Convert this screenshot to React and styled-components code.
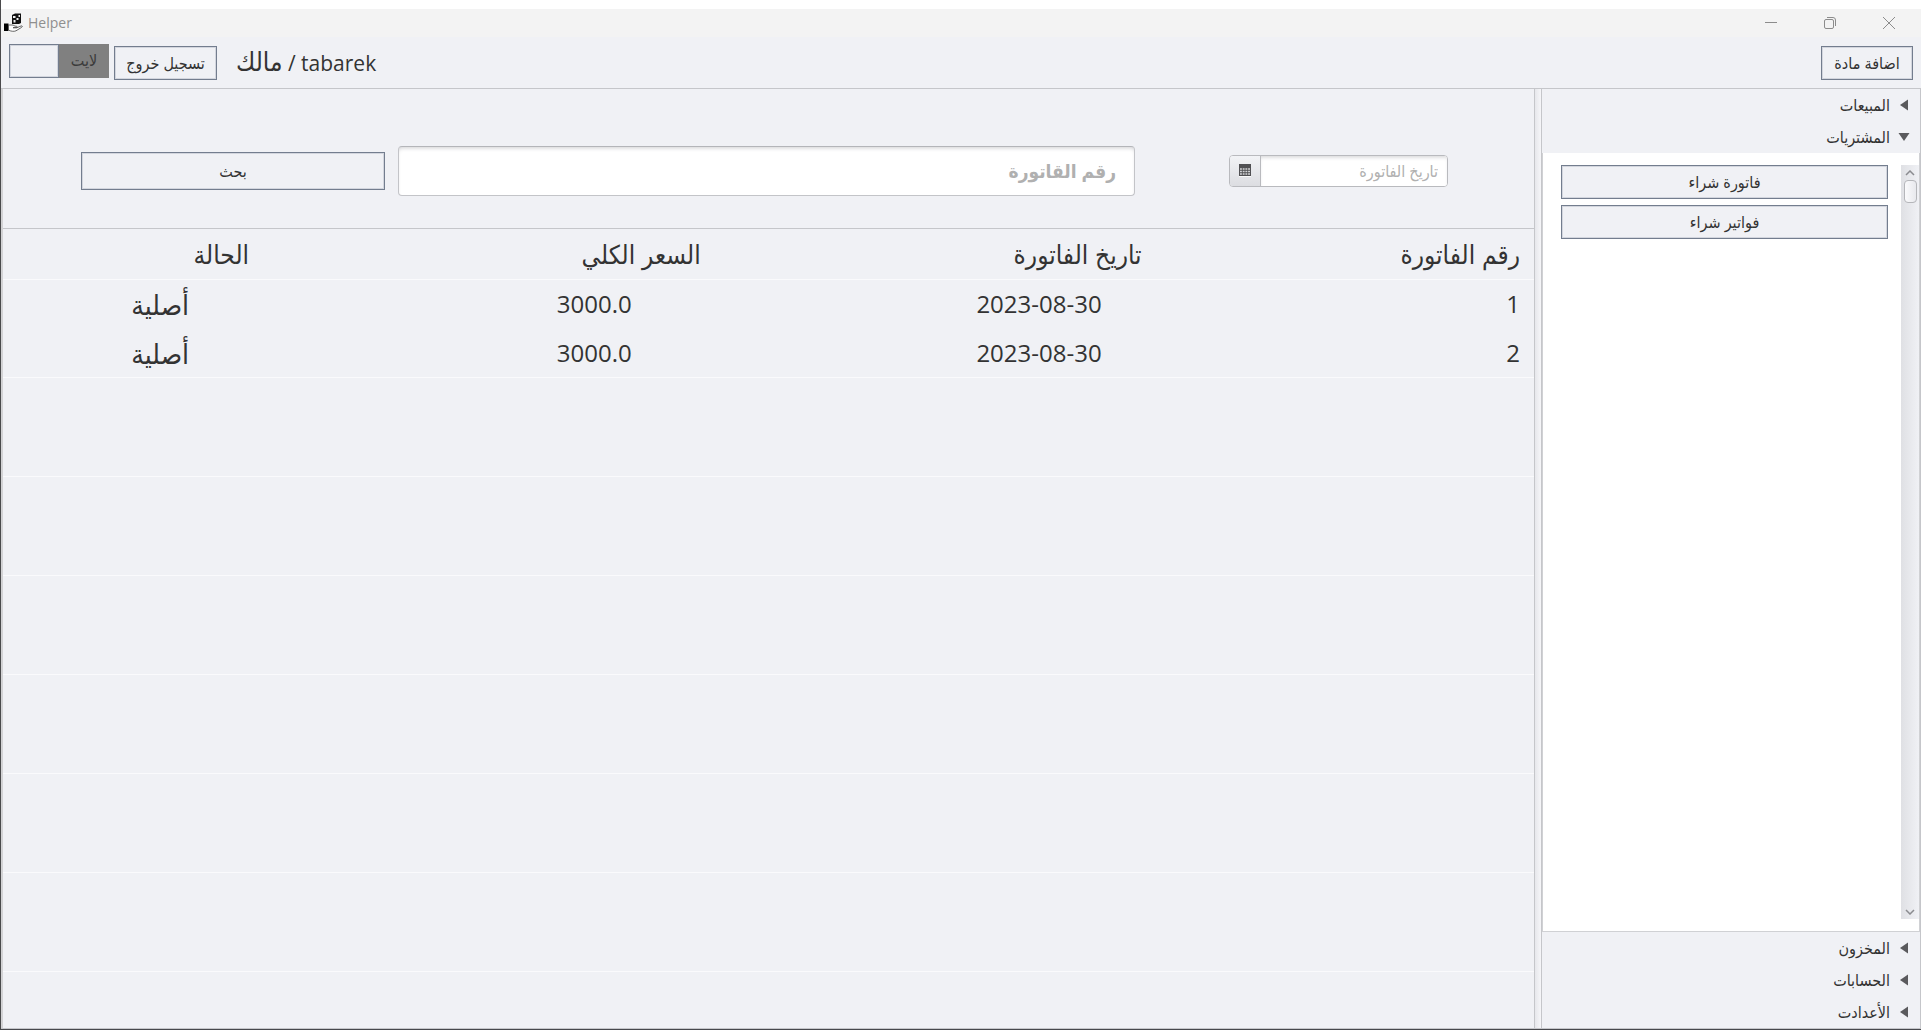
import React from 'react';
import styled, { createGlobalStyle } from 'styled-components';

const ink = '#333333';
const surface = '#f0f1f5';
const line = '#c5c6ca';
const outline = '#737d8e';

const GlobalStyle = createGlobalStyle`
  * { box-sizing: border-box; }
  html, body, #root { height: 100%; }
  body {
    margin: 0;
    background: #ffffff;
    color: ${ink};
    font: 16px/20px 'Open Sans', 'DejaVu Sans Condensed', 'DejaVu Sans', sans-serif;
  }
  button, input { font: inherit; color: inherit; margin: 0; }
`;

const Window = styled.div`
  height: 100vh;
  display: flex;
  flex-direction: column;
  padding-top: 9px;
  border-left: 1px solid #4a4a4c;
  border-bottom: 1px solid #47484c;
`;

const TitleBar = styled.header`
  height: 28px;
  flex: none;
  display: flex;
  align-items: center;
  background: #f3f3f3;
  color: #8f8f8f;
  padding: 0 26px 0 3px;
`;

const Title = styled.span`
  flex: 1;
  margin-left: 5px;
  font-size: 14px;
  line-height: 22px;
`;

const WindowButtons = styled.div`
  display: flex;
  gap: 47px;
`;

const WindowButton = styled.button`
  width: 12px;
  height: 12px;
  padding: 0;
  border: 0;
  background: none;
  display: flex;
  svg { display: block; }
`;

const Toolbar = styled.div`
  height: 52px;
  flex: none;
  display: flex;
  align-items: flex-start;
  gap: 5px;
  padding: 7px 8px 0;
  background: ${surface};
  border-bottom: 1px solid ${line};
`;

const OutlineButton = styled.button`
  height: ${p => p.$height || 34}px;
  width: ${p => p.$width || 'auto'};
  padding: 0;
  background: ${surface};
  border: 1px solid ${outline};
  box-shadow: inset 0 0 0 1px #d3d6de;
  line-height: 20px;
`;

const ToolbarButton = styled(OutlineButton)`
  margin-top: 2px;
`;

const Toggle = styled.button`
  width: 100px;
  height: 34px;
  padding: 0;
  border: 0;
  display: flex;
  background: #808080;
  color: #3b3b3b;
  line-height: 32px;
`;

const Knob = styled.span`
  width: 50px;
  height: 34px;
  background: ${surface};
  border: 1px solid ${outline};
  box-shadow: inset 0 0 0 1px #d3d6de;
`;

const ToggleText = styled.span`
  flex: 1;
`;

const UserName = styled.span`
  flex: 1;
  padding-left: 14px;
  font-size: 21px;
  line-height: 34px;
`;

const Role = styled.span`
  font-size: 26px;
`;

const Workspace = styled.div`
  flex: 1;
  min-height: 0;
  display: flex;
  background: ${surface};
  border-bottom: 1px solid ${line};
`;

const Main = styled.main`
  flex: 1;
  min-width: 0;
  display: flex;
  flex-direction: column;
  overflow: hidden;
  border-left: 2px solid #d3d3d5;
`;

const SearchForm = styled.form`
  flex: none;
  display: flex;
  align-items: center;
  padding: 57px 86px 32px 78px;
  border-bottom: 1px solid ${line};
`;

const SearchSlot = styled.div`
  flex: ${p => p.$grow} 1 0;
  min-width: 0;
  display: flex;
  margin-right: ${p => p.$after || 0}px;
`;

const NumberField = styled.input`
  width: 100%;
  height: 50px;
  padding: 0 18px;
  background: #ffffff;
  border: 1px solid #c3c4c8;
  border-top-color: #b4b5b9;
  border-radius: 4px;
  box-shadow: inset 0 3px 4px -2px #cfcfd2;
  font-size: 19px;
  font-weight: 700;
  &::placeholder { color: #b0b0b0; opacity: 1; }
`;

const DatePicker = styled.div`
  width: 100%;
  height: 32px;
  display: flex;
  background: #ffffff;
  border: 1px solid #b9babe;
  border-radius: 4px;
  overflow: hidden;
`;

const CalendarButton = styled.button`
  width: 31px;
  flex: none;
  padding: 0;
  display: flex;
  align-items: center;
  justify-content: center;
  border: 0;
  border-right: 1px solid #b9babe;
  background: linear-gradient(#f2f3f6, #dcdde1);
`;

const DateField = styled.input`
  flex: 1;
  min-width: 0;
  border: 0;
  padding: 0 9px;
  background: #ffffff;
  box-shadow: inset 0 3px 4px -2px #cfcfd2;
  &::placeholder { color: #b0b0b0; opacity: 1; }
`;

const Invoices = styled.table`
  flex: none;
  width: 100%;
  table-layout: fixed;
  border-collapse: collapse;
  font-size: 26px;
  line-height: 32px;
`;

const HeadCell = styled.th`
  height: 50px;
  padding: 0 ${p => p.$indent}px 0 0;
  font-weight: 400;
  text-align: right;
  border-bottom: 1px solid #fafafc;
`;

const Cell = styled.td`
  height: 49px;
  padding: 0 ${p => p.$indent}px 0 0;
  text-align: right;
  font-size: ${p => (p.$numeric ? 24 : 28)}px;
  line-height: ${p => (p.$numeric ? 32 : 28)}px;
`;

const EmptyRow = styled.div`
  height: 99px;
  flex: none;
  border-top: 1px solid #fafafc;
`;

const Divider = styled.div`
  width: 8px;
  flex: none;
  border: solid ${line};
  border-width: 0 1px;
  background: linear-gradient(90deg, #e6e7eb, #f6f6f9);
`;

const Sidebar = styled.aside`
  width: 379px;
  flex: none;
  display: flex;
  flex-direction: column;
  border-right: 1px solid ${line};
`;

const SectionHeader = styled.button`
  height: 32px;
  flex: none;
  display: flex;
  align-items: center;
  gap: 8px;
  padding: 0 10px;
  border: 0;
  background: ${surface};
  line-height: 20px;
  direction: rtl;
`;

const ArrowBox = styled.svg`
  width: 12px;
  height: 12px;
  fill: #5a5a5d;
`;

const Panel = styled.div`
  flex: 1;
  min-height: 0;
  display: flex;
  align-items: stretch;
  gap: 13px;
  padding: 12px 0 12px 18px;
  background: #ffffff;
  border: solid #d0d1d4;
  border-width: 0 1px 1px;
`;

const PanelButtons = styled.div`
  flex: 1;
  display: flex;
  flex-direction: column;
  gap: 6px;
`;

const ScrollBar = styled.div`
  width: 18px;
  display: flex;
  flex-direction: column;
  justify-content: space-between;
  background: linear-gradient(90deg, #dfe0e4, #f0f1f5);
`;

const ScrollTop = styled.div`
  display: flex;
  flex-direction: column;
  align-items: center;
`;

const ScrollButton = styled.button`
  width: 18px;
  height: 15px;
  padding: 0;
  border: 0;
  background: none;
  display: flex;
  align-items: center;
  justify-content: center;
`;

const Thumb = styled.div`
  width: 13px;
  height: 23px;
  border: 1px solid #b5b6ba;
  border-radius: 4px;
  background: linear-gradient(90deg, #fafafc, #e8e9ed);
`;

const AppIcon = () => (
  <svg width="19" height="20" viewBox="0 0 19 20">
    <path d="M8 2l3-1.500h6V10l-2 1H8z" fill="#111" />
    <path d="M9 3h2.500v2H9z M12.500 5h2v2h-2z M9.500 7h2v2.500h-2z M14.500 2h1.500v2h-1.500z" fill="#eee" />
    <path d="M0 10.500h4.500V18H0z" fill="#000" />
    <path d="M4.500 12h3.500c2 0 2 1.300 4.500 1.300 1 0 1 1.400 0 1.400H9h4l4-1.700c1.500-.4 1.700.6.7 1.300L12 17.800c-2 1-5.500.5-7.500-.8z" fill="#fff" stroke="#444" strokeWidth=".8" />
  </svg>
);

const CalendarIcon = () => (
  <svg width="12" height="14" viewBox="0 0 12 14">
    <path d="M0 0h12v12H0z" fill="#505053" />
    <path d="M1 5h10M1 7.500h10M1 10h10" stroke="#d4d5d8" strokeWidth="1.500" strokeDasharray="1.900 .8" />
    <path d="M0 12.500h12" stroke="#fafafa" />
  </svg>
);

const Arrow = ({ open }) => (
  <ArrowBox viewBox="0 0 12 12">
    <path d={open ? 'M.5 2h11L6 10z' : 'M10 .5v11L2 6z'} />
  </ArrowBox>
);

const Chevron = ({ down }) => (
  <svg width="10" height="6" viewBox="0 0 10 6" fill="none" stroke="#8b8c90" strokeWidth="1.500">
    <path d={down ? 'M1 1l4 4 4-4' : 'M1 5l4-4 4 4'} />
  </svg>
);

const columns = [
  { title: 'رقم الفاتورة', width: '25.500%', headIndent: 14, indent: 14, numeric: true },
  { title: 'تاريخ الفاتورة', width: '28.800%', headIndent: 2, indent: 42, numeric: true },
  { title: 'السعر الكلي', width: '29.500%', headIndent: 2, indent: 71, numeric: true },
  { title: 'الحالة', width: '16.200%', headIndent: 2, indent: 62, numeric: false },
];

const invoices = [
  ['1', '2023-08-30', '3000.0', 'أصلية'],
  ['2', '2023-08-30', '3000.0', 'أصلية'],
];

export default function App() {
  return (
    <>
      <GlobalStyle />
      <Window>
        <TitleBar>
          <AppIcon />
          <Title>Helper</Title>
          <WindowButtons>
            <WindowButton aria-label="Minimize">
              <svg width="12" height="12" fill="none" stroke="#8c8c8c"><path d="M0 5.500h12" /></svg>
            </WindowButton>
            <WindowButton aria-label="Restore">
              <svg width="12" height="12" fill="none" stroke="#8c8c8c">
                <rect x=".5" y="2.500" width="9" height="9" rx="1.500" />
                <path d="M3 .5h6a2.500 2.500 0 0 1 2.500 2.500v6" />
              </svg>
            </WindowButton>
            <WindowButton aria-label="Close">
              <svg width="12" height="12" fill="none" stroke="#8c8c8c"><path d="M0 0l12 12M12 0L0 12" /></svg>
            </WindowButton>
          </WindowButtons>
        </TitleBar>

        <Toolbar>
          <Toggle role="switch" aria-checked="false">
            <Knob />
            <ToggleText>لايت</ToggleText>
          </Toggle>
          <ToolbarButton $width="103px">تسجيل خروج</ToolbarButton>
          <UserName><Role>مالك</Role> / tabarek</UserName>
          <ToolbarButton $width="92px">اضافة مادة</ToolbarButton>
        </Toolbar>

        <Workspace>
          <Main>
            <SearchForm onSubmit={e => e.preventDefault()}>
              <SearchSlot $grow={304} $after={13}>
                <OutlineButton $width="100%" $height={38}>بحث</OutlineButton>
              </SearchSlot>
              <SearchSlot $grow={737} $after={94}>
                <NumberField dir="rtl" aria-label="رقم القاتورة" placeholder="رقم القاتورة" />
              </SearchSlot>
              <SearchSlot $grow={219}>
                <DatePicker>
                  <CalendarButton type="button" aria-label="تاريخ الفاتورة"><CalendarIcon /></CalendarButton>
                  <DateField dir="rtl" aria-label="تاريخ الفاتورة" placeholder="تاريخ الفاتورة" />
                </DatePicker>
              </SearchSlot>
            </SearchForm>
            <Invoices dir="rtl">
              <colgroup>
                {columns.map(c => <col key={c.title} style={{ width: c.width }} />)}
              </colgroup>
              <thead>
                <tr>{columns.map(c => <HeadCell key={c.title} $indent={c.headIndent}>{c.title}</HeadCell>)}</tr>
              </thead>
              <tbody>
                {invoices.map(row => (
                  <tr key={row[0]}>
                    {row.map((value, i) => (
                      <Cell key={i} $indent={columns[i].indent} $numeric={columns[i].numeric}>{value}</Cell>
                    ))}
                  </tr>
                ))}
              </tbody>
            </Invoices>
            {Array.from({ length: 7 }, (_, i) => <EmptyRow key={i} />)}
          </Main>
          <Divider />
          <Sidebar>
            <SectionHeader aria-expanded="false"><Arrow />المبيعات</SectionHeader>
            <SectionHeader aria-expanded="true"><Arrow open />المشتريات</SectionHeader>
            <Panel>
              <PanelButtons>
                <OutlineButton>فاتورة شراء</OutlineButton>
                <OutlineButton>فواتير شراء</OutlineButton>
              </PanelButtons>
              <ScrollBar>
                <ScrollTop>
                  <ScrollButton aria-label="Scroll up"><Chevron /></ScrollButton>
                  <Thumb />
                </ScrollTop>
                <ScrollButton aria-label="Scroll down"><Chevron down /></ScrollButton>
              </ScrollBar>
            </Panel>
            <SectionHeader aria-expanded="false"><Arrow />المخزون</SectionHeader>
            <SectionHeader aria-expanded="false"><Arrow />الحسابات</SectionHeader>
            <SectionHeader aria-expanded="false"><Arrow />الأعدادت</SectionHeader>
          </Sidebar>
        </Workspace>
      </Window>
    </>
  );
}
